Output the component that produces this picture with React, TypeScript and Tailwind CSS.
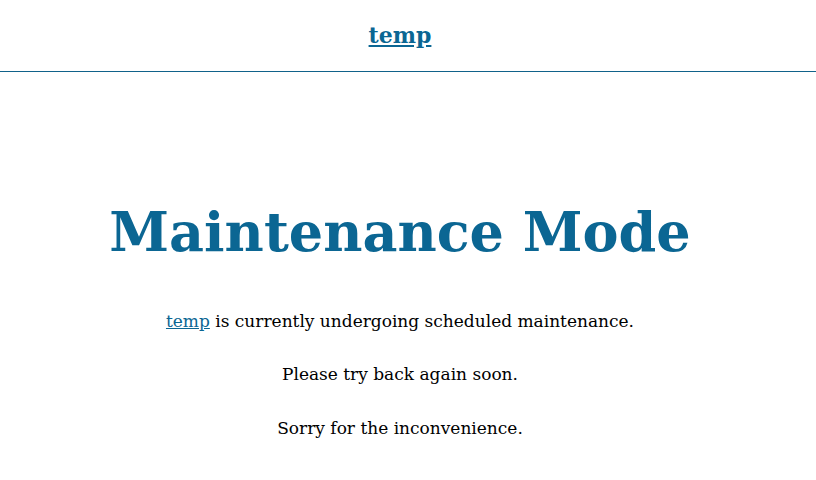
export default function App() {
  return (
    <div className="min-h-[480px] bg-white" style={{ fontFamily: '"DejaVu Serif", serif' }}>
      <header className="h-[72px] border-b border-[#11628a] flex items-center justify-center pr-4">
        <a href="#" className="text-[22px] font-bold text-[#0b6693] underline">
          temp
        </a>
      </header>
      <main className="flex flex-col items-center pt-[125px] pr-4 text-center">
        <h1 className="text-[54px] leading-[70px] font-bold text-[#0b6693]">Maintenance Mode</h1>
        <p className="mt-[41px] text-[17px] leading-[26px] text-black">
          <a href="#" className="text-[#0b6693] underline">temp</a> is currently undergoing scheduled maintenance.
        </p>
        <p className="mt-[27px] text-[17px] leading-[26px] text-black">Please try back again soon.</p>
        <p className="mt-[28px] text-[17px] leading-[26px] text-black">Sorry for the inconvenience.</p>
      </main>
    </div>
  )
}
